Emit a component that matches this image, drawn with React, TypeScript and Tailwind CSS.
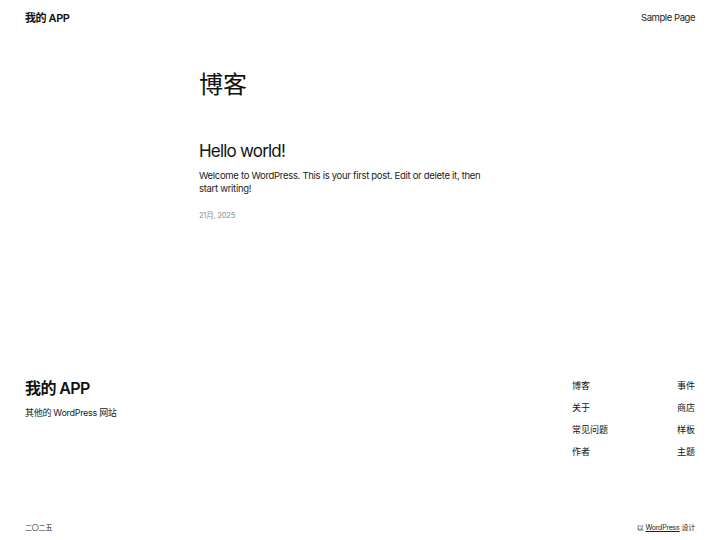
const font = { fontFamily: 'Inter, "Noto Sans CJK SC", sans-serif' };

const navLeft = ["博客", "关于", "常见问题", "作者"];
const navRight = ["事件", "商店", "样板", "主题"];

export default function App() {
  return (
    <div
      className="flex min-h-screen w-full flex-col bg-white text-[#111111]"
      style={font}
    >
      {/* Header */}
      <header className="flex items-center justify-between px-[25px] pt-[10px]">
        <div className="text-[11px] font-semibold tracking-[-0.4px]">我的 APP</div>
        <div className="text-[9.5px] tracking-[-0.45px] text-[#222]">Sample Page</div>
      </header>

      {/* Main */}
      <main className="mx-auto w-[322px] pt-[40px]">
        <h1 className="text-[24px] font-normal leading-[36px]">博客</h1>
        <article className="mt-[36px]">
          <h2 className="text-[17px] font-normal leading-[24px] tracking-[-0.8px]">Hello world!</h2>
          <p className="mt-[6px] max-w-[285px] text-[9.5px] leading-[13px] tracking-[-0.3px] text-[#222]">
            Welcome to WordPress. This is your first post. Edit or delete it, then start writing!
          </p>
          <div className="mt-[15px] text-[7.5px] tracking-[-0.2px] text-[#888]">21月, 2025</div>
        </article>
      </main>

      {/* Footer */}
      <footer className="mt-auto px-[25px] pb-[7px]">
        <div className="flex justify-between">
          <div>
            <div className="text-[16px] font-semibold leading-[20px] tracking-[-0.6px]">我的 APP</div>
            <div className="mt-[8px] text-[9px] tracking-[-0.3px] text-[#222]">其他的 WordPress 网站</div>
          </div>
          <div className="flex w-[123px] justify-between pt-[1px] text-[9px]">
            <ul className="flex flex-col gap-[8px]">
              {navLeft.map((t) => (
                <li key={t} className="leading-[14px]">{t}</li>
              ))}
            </ul>
            <ul className="flex flex-col items-end gap-[8px]">
              {navRight.map((t) => (
                <li key={t} className="leading-[14px]">{t}</li>
              ))}
            </ul>
          </div>
        </div>
        <div className="mt-[64px] flex justify-between text-[7px] tracking-[-0.2px] text-[#222]">
          <span>二〇二五</span>
          <span>
            以 <a className="underline">WordPress</a> 设计
          </span>
        </div>
      </footer>
    </div>
  );
}
